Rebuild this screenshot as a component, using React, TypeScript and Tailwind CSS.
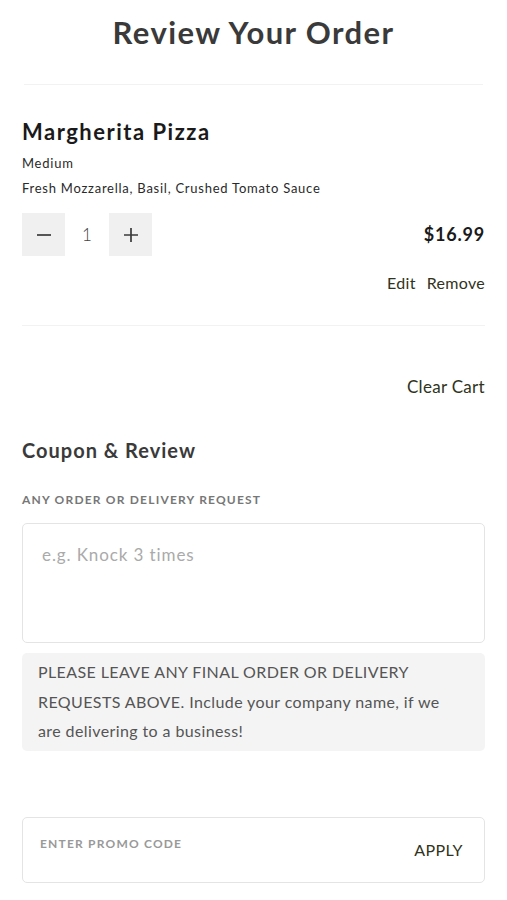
import { useState } from "react";

export default function App() {
  const [qty, setQty] = useState(1);
  const [note, setNote] = useState("");
  const [promo, setPromo] = useState("");

  return (
    <main
      className="min-h-screen bg-white text-[#1c1c1c]"
      style={{ fontFamily: "Lato, 'Open Sans', sans-serif" }}
    >
      <div className="px-[22px] pt-[13px]">
        <h1 className="text-center text-[31px] font-bold leading-[38px] tracking-[1.4px] text-[#3a3a3a]">
          Review Your Order
        </h1>
        <div className="mx-[2px] mt-[33px] h-px bg-[#f2f2f2]" />

        <section className="pt-[33px]">
          <h2 className="text-[22px] font-bold leading-[28px] tracking-[1.5px] text-[#1a1a1a]">
            Margherita Pizza
          </h2>
          <p className="mt-[8px] text-[13px] leading-[18px] tracking-[0.75px] text-[#2a2a2a]">
            Medium
          </p>
          <p className="mt-[7px] text-[13px] leading-[18px] tracking-[0.75px] text-[#2a2a2a]">
            Fresh Mozzarella, Basil, Crushed Tomato Sauce
          </p>

          <div className="mt-[16px] flex items-center justify-between">
            <div className="flex items-center">
              <button
                type="button"
                onClick={() => setQty(Math.max(1, qty - 1))}
                className="flex h-[43px] w-[43px] items-center justify-center bg-[#f0f0f0] text-[#3a3a3a]"
              >
                <svg width="16" height="16" viewBox="0 0 16 16">
                  <path d="M1 8h14" stroke="currentColor" strokeWidth="1.7" />
                </svg>
              </button>
              <span className="w-[44px] text-center text-[17px] font-light text-[#444]">{qty}</span>
              <button
                type="button"
                onClick={() => setQty(qty + 1)}
                className="flex h-[43px] w-[43px] items-center justify-center bg-[#f0f0f0] text-[#3a3a3a]"
              >
                <svg width="16" height="16" viewBox="0 0 16 16">
                  <path d="M1 8h14M8 1v14" stroke="currentColor" strokeWidth="1.7" />
                </svg>
              </button>
            </div>
            <span className="text-[18px] font-bold tracking-[0.8px] text-[#1a1a1a]">
              ${(16.99 * qty).toFixed(2)}
            </span>
          </div>

          <div className="mt-[16px] flex justify-end gap-[11px] text-[16px] leading-[22px] tracking-[0.3px] text-[#2f3320]">
            <button type="button">Edit</button>
            <button type="button">Remove</button>
          </div>
        </section>

        <div className="mt-[31px] h-px bg-[#f2f2f2]" />

        <div className="mt-[50px] flex justify-end">
          <button type="button" className="text-[17px] leading-[22px] tracking-[0.3px] text-[#2f3320]">
            Clear Cart
          </button>
        </div>

        <h3 className="mt-[39px] text-[20px] font-bold leading-[26px] tracking-[1px] text-[#3a3a3a]">
          Coupon &amp; Review
        </h3>
        <label className="mt-[29px] block text-[12px] font-bold leading-[16px] tracking-[1.2px] text-[#777]">
          ANY ORDER OR DELIVERY REQUEST
        </label>

        <textarea
          value={note}
          onChange={(e) => setNote(e.target.value)}
          placeholder="e.g. Knock 3 times"
          className="mt-[15px] block h-[120px] w-full resize-none rounded-[5px] border border-[#e4e4e4] px-[19px] py-[20px] text-[17px] leading-[22px] tracking-[0.9px] text-[#333] placeholder:text-[#aaa] focus:outline-none"
        />

        <div className="mt-[10px] rounded-[5px] bg-[#f4f4f4] pl-[16px] pr-[36px] pt-[4px] pb-[5px] text-[16px] leading-[29.5px] tracking-[0.4px] text-[#555]">
          PLEASE LEAVE ANY FINAL ORDER OR DELIVERY REQUESTS ABOVE. Include your company name, if we
          are delivering to a business!
        </div>

        <div className="mt-[66px] flex h-[66px] items-center rounded-[5px] border border-[#e4e4e4] pl-[17px] pr-[21px]">
          <input
            value={promo}
            onChange={(e) => setPromo(e.target.value)}
            placeholder="ENTER PROMO CODE"
            className="-mt-[12px] flex-1 bg-transparent text-[12px] font-bold tracking-[1.2px] text-[#333] placeholder:text-[#999] focus:outline-none"
          />
          <button type="button" className="text-[16px] leading-[20px] tracking-[0.4px] text-[#2f3320]">
            APPLY
          </button>
        </div>
      </div>
    </main>
  );
}
